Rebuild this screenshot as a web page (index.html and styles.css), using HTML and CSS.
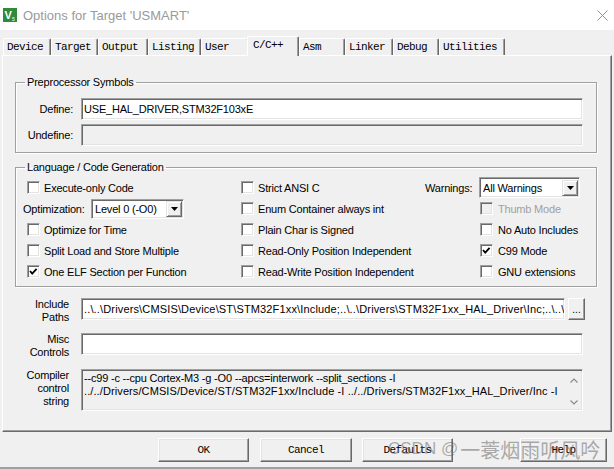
FILE: index.html
```html
<!DOCTYPE html>
<html lang="en">
<head>
<meta charset="utf-8">
<title>Options for Target 'USMART'</title>
<link rel="stylesheet" href="styles.css">
</head>
<body>
<div class="window">
  <div class="titlebar">
    <svg class="app-icon" viewBox="0 0 14 14"><rect width="14" height="14" fill="#2f8a3a"/><text x="1.5" y="11" font-family="Liberation Sans" font-weight="bold" font-size="11" fill="#fff">V</text><text x="9" y="13" font-family="Liberation Sans" font-size="5" fill="#fff">5</text></svg>
    <span class="title">Options for Target 'USMART'</span>
    <svg class="close" viewBox="0 0 11 11"><path d="M0.5 0.5L10.5 10.5M10.5 0.5L0.5 10.5" stroke="#8f8f8f" stroke-width="1" fill="none"/></svg>
  </div>

  <div class="tabs">
    <div class="tab">Device</div>
    <div class="tab">Target</div>
    <div class="tab">Output</div>
    <div class="tab">Listing</div>
    <div class="tab">User</div>
    <div class="tab active">C/C++</div>
    <div class="tab">Asm</div>
    <div class="tab">Linker</div>
    <div class="tab">Debug</div>
    <div class="tab">Utilities</div>
  </div>

  <div class="panel">
    <fieldset class="group g-pre">
      <legend>Preprocessor Symbols</legend>
      <div class="sym">
        <span class="lbl">Define:</span>
        <div class="field">USE_HAL_DRIVER,STM32F103xE</div>
        <span class="lbl">Undefine:</span>
        <div class="field disabled"></div>
      </div>
    </fieldset>

    <fieldset class="group g-lang">
      <legend>Language / Code Generation</legend>
      <div class="opts">
        <div class="cb c1"><span class="box"></span><span>Execute-only Code</span></div>
        <div class="cb c2"><span class="box"></span><span>Strict ANSI C</span></div>
        <div class="cell c3"><span class="sel-label warn-label">Warnings:</span><div class="select warn"><span class="sel-text">All Warnings</span><span class="arrow"><svg viewBox="0 0 7 4" width="7" height="4"><path d="M0 0H7L3.5 4Z" fill="#000"/></svg></span></div></div>

        <div class="cell c1 opt-cell"><span class="sel-label opt-label">Optimization:</span><div class="select opt"><span class="sel-text">Level 0 (-O0)</span><span class="arrow"><svg viewBox="0 0 7 4" width="7" height="4"><path d="M0 0H7L3.5 4Z" fill="#000"/></svg></span></div></div>
        <div class="cb c2"><span class="box"></span><span>Enum Container always int</span></div>
        <div class="cb c3 disabled"><span class="box"></span><span>Thumb Mode</span></div>

        <div class="cb c1"><span class="box"></span><span>Optimize for Time</span></div>
        <div class="cb c2"><span class="box"></span><span>Plain Char is Signed</span></div>
        <div class="cb c3"><span class="box"></span><span>No Auto Includes</span></div>

        <div class="cb c1"><span class="box"></span><span>Split Load and Store Multiple</span></div>
        <div class="cb c2"><span class="box"></span><span>Read-Only Position Independent</span></div>
        <div class="cb c3"><span class="box"><svg viewBox="0 0 11 11"><polyline points="2,5 4.2,7.6 8.6,2.8" fill="none" stroke="#000" stroke-width="1.8"/></svg></span><span>C99 Mode</span></div>

        <div class="cb c1"><span class="box"><svg viewBox="0 0 11 11"><polyline points="2,5 4.2,7.6 8.6,2.8" fill="none" stroke="#000" stroke-width="1.8"/></svg></span><span>One ELF Section per Function</span></div>
        <div class="cb c2"><span class="box"></span><span>Read-Write Position Independent</span></div>
        <div class="cb c3"><span class="box"></span><span>GNU extensions</span></div>
      </div>
    </fieldset>

    <div class="prow first">
      <span class="plabel">Include<br>Paths</span>
      <div class="field inc">..\..\Drivers\CMSIS\Device\ST\STM32F1xx\Include;..\..\Drivers\STM32F1xx_HAL_Driver\Inc;..\..\</div>
      <div class="browse">...</div>
    </div>
    <div class="prow misc">
      <span class="plabel">Misc<br>Controls</span>
      <div class="field wide"></div>
    </div>
    <div class="prow comp">
      <span class="plabel">Compiler<br>control<br>string</span>
      <div class="field wide area">
        <div class="area-text">--c99 -c --cpu Cortex-M3 -g -O0 --apcs=interwork --split_sections -I<br><span class="l2">../../Drivers/CMSIS/Device/ST/STM32F1xx/Include -I ../../Drivers/STM32F1xx_HAL_Driver/Inc -I</span></div>
        <div class="sbar">
          <svg viewBox="0 0 8 5" width="8" height="5"><polyline points="0.5,4.5 4,1 7.5,4.5" fill="none" stroke="#8a8a8a" stroke-width="1.2"/></svg>
          <svg viewBox="0 0 8 5" width="8" height="5"><polyline points="0.5,0.5 4,4 7.5,0.5" fill="none" stroke="#8a8a8a" stroke-width="1.2"/></svg>
        </div>
      </div>
    </div>
  </div>

  <div class="buttons">
    <div class="btn b-ok">OK</div>
    <div class="btn b-cancel">Cancel</div>
    <div class="btn b-def">Defaults</div>
    <div class="btn b-help">Help</div>
  </div>
  <div class="bottom-edge"></div>

  <div class="watermark"><span class="wm-latin">CSDN @</span><span class="wm-cjk">一蓑烟雨听风吟</span></div>
</div>
</body>
</html>
```

FILE: styles.css
```css
* { box-sizing: border-box; }
html, body { margin: 0; padding: 0; }
body {
  background: #f0f0f0;
  font-family: "Liberation Sans", Arial, sans-serif;
  font-size: 11px;
  letter-spacing: -0.2px;
  color: #000;
}
.window {
  position: relative;
  width: 614px;
  height: 469px;
  overflow: hidden;
  background: #f0f0f0;
}

/* title bar */
.titlebar {
  height: 30px;
  background: #fff;
  display: flex;
  align-items: center;
  padding-left: 3px;
}
.app-icon { width: 14px; height: 14px; margin-right: 6px; flex: none; }
.title { font-size: 13px; letter-spacing: 0; color: #9a9a9a; }
.close { width: 11px; height: 11px; margin-left: auto; margin-right: 6px; }

/* tabs */
.tabs {
  display: flex;
  align-items: flex-end;
  height: 19px;
  margin-top: 6px;
  padding-left: 3px;
  position: relative;
  z-index: 1;
}
.tab {
  height: 17px;
  border: 1px solid #fff;
  border-bottom: 0;
  border-right-color: #696969;
  box-shadow: inset -1px 0 #a0a0a0;
  border-radius: 2px 2px 0 0;
  padding: 1px 0 0 3px;
  font-family: "Liberation Mono", "Courier New", monospace;
  font-size: 11px;
  letter-spacing: -0.6px;
  line-height: 15px;
  background: #f0f0f0;
  white-space: nowrap;
  flex: none;
}
.tab:nth-child(1) { width: 48px; }
.tab:nth-child(2) { width: 47px; }
.tab:nth-child(3) { width: 50px; }
.tab:nth-child(4) { width: 53px; }
.tab:nth-child(5) { width: 48px; }
.tab:nth-child(6) { width: 52px; }
.tab:nth-child(7) { width: 46px; }
.tab:nth-child(8) { width: 48px; }
.tab:nth-child(9) { width: 46px; }
.tab:nth-child(10) { width: 66px; }
.tab.active {
  height: 20px;
  margin-left: -2px;
  margin-bottom: -1px;
  padding-left: 5px;
  position: relative;
}

/* panel */
.panel {
  margin-left: 2px;
  width: 610px;
  height: 377px;
  border: 1px solid;
  border-color: #fff #696969 #696969 #fff;
  box-shadow: inset -1px -1px #a0a0a0;
  padding: 19px 0 0 12px;
}

/* group boxes */
.group {
  margin: 0;
  width: 582px;
  min-width: 0;
  border: 1px solid #a0a0a0;
  box-shadow: 1px 1px #fff, inset 1px 1px #fff;
  padding: 0;
}
.group legend {
  margin-left: 9px;
  padding: 0 2px;
  line-height: 14px;
}
.g-pre { padding-bottom: 6px; }
.g-lang { margin-top: 7px; padding-bottom: 4px; }

.sym {
  margin-top: 9px;
  display: grid;
  grid-template-columns: 57px 502px;
  column-gap: 8px;
  row-gap: 4px;
  align-items: center;
}
.lbl { text-align: right; }

/* fields */
.field {
  height: 22px;
  border: 1px solid;
  border-color: #a0a0a0 #fff #fff #a0a0a0;
  box-shadow: inset 1px 1px #696969, inset -1px -1px #e3e3e3;
  background: #fff;
  padding: 0 2px;
  line-height: 20px;
  white-space: nowrap;
  overflow: hidden;
}
.field.disabled { background: #f0f0f0; }

/* options grid */
.opts {
  margin: 3px 0 0 7px;
  display: grid;
  grid-template-columns: 218px 184px 166px;
  grid-auto-rows: 21px;
  align-items: center;
}
.cb, .cell {
  display: flex;
  align-items: center;
  white-space: nowrap;
}
.cb.c1 { padding-left: 4px; }
.cb.c3 { padding-left: 55px; }
.cb.c3 .box { margin-right: 5px; }
.box {
  width: 13px;
  height: 13px;
  flex: none;
  margin-right: 4px;
  border: 1px solid;
  border-color: #a0a0a0 #fff #fff #a0a0a0;
  box-shadow: inset 1px 1px #696969, inset -1px -1px #e3e3e3;
  background: #fff;
  display: flex;
}
.box svg { width: 11px; height: 11px; }
.cb.disabled { color: #a0a0a0; }
.cb.disabled .box { background: #f0f0f0; }

.sel-label { flex: none; }
.opt-label { width: 68px; }
.warn-label { width: 54px; }
.select {
  display: flex;
  align-items: center;
  border: 1px solid;
  border-color: #a0a0a0 #fff #fff #a0a0a0;
  box-shadow: inset 1px 1px #696969, inset -1px -1px #e3e3e3;
  background: #fff;
  padding: 1px 1px 1px 3px;
}
.select.opt { width: 93px; height: 20px; }
.select.warn { width: 101px; height: 21px; }
.sel-text { flex: 1; white-space: nowrap; overflow: hidden; }
.arrow {
  width: 16px;
  height: 16px;
  flex: none;
  display: flex;
  align-items: center;
  justify-content: center;
  border: 1px solid;
  border-color: #e3e3e3 #696969 #696969 #e3e3e3;
  box-shadow: inset 1px 1px #fff, inset -1px -1px #a0a0a0;
  background: #f0f0f0;
}

/* path rows */
.prow { display: flex; align-items: flex-start; }
.prow.first { margin-top: 11px; }
.prow.misc { margin-top: 9px; }
.prow.comp { margin-top: 10px; }
.plabel {
  width: 54px;
  margin-right: 12px;
  text-align: right;
  line-height: 13px;
  flex: none;
}
.field.inc { width: 484px; letter-spacing: 0.15px; text-overflow: clip; }
.field.wide { width: 502px; }
.browse {
  width: 17px;
  height: 22px;
  margin-left: 3px;
  border: 1px solid;
  border-color: #fff #696969 #696969 #fff;
  box-shadow: inset -1px -1px #a0a0a0;
  text-align: center;
  line-height: 22px;
  font-size: 10px;
  letter-spacing: 0;
}
.field.area {
  height: 42px;
  display: flex;
  background: #f0f0f0;
  padding: 0;
  line-height: 13px;
}
.area-text {
  flex: 1;
  padding: 2px 0 0 2px;
  white-space: nowrap;
  overflow: hidden;
}
.l2 { letter-spacing: 0.1px; }
.sbar {
  width: 17px;
  flex: none;
  display: flex;
  flex-direction: column;
  justify-content: space-between;
  align-items: center;
  padding: 8px 0 5px;
}

/* buttons */
.buttons {
  display: flex;
  margin-top: 6px;
  padding-left: 158px;
}
.btn {
  height: 24px;
  border: 1px solid;
  border-color: #fff #696969 #696969 #fff;
  box-shadow: inset -1px -1px #a0a0a0, inset 1px 1px #e3e3e3;
  background: #f0f0f0;
  font-family: "Liberation Mono", "Courier New", monospace;
  font-size: 11px;
  letter-spacing: -0.6px;
  line-height: 22px;
  text-align: center;
}
.b-ok { width: 91px; margin-right: 11px; }
.b-cancel { width: 92px; margin-right: 10px; }
.b-def { width: 91px; margin-right: 67px; }
.b-help { width: 87px; }

.bottom-edge {
  margin-top: 5px;
  height: 2px;
  background: #a0a0a0;
}

/* watermark overlay */
.watermark {
  position: absolute;
  left: 388px;
  top: 437px;
  height: 24px;
  display: flex;
  align-items: center;
  white-space: nowrap;
  color: rgba(95, 95, 95, 0.5);
  letter-spacing: 0;
  pointer-events: none;
}
.wm-latin { font-family: "Liberation Sans", sans-serif; font-size: 17px; margin-right: 2px; }
.wm-cjk { font-family: "Noto Sans CJK SC", sans-serif; font-size: 20px; }
```
